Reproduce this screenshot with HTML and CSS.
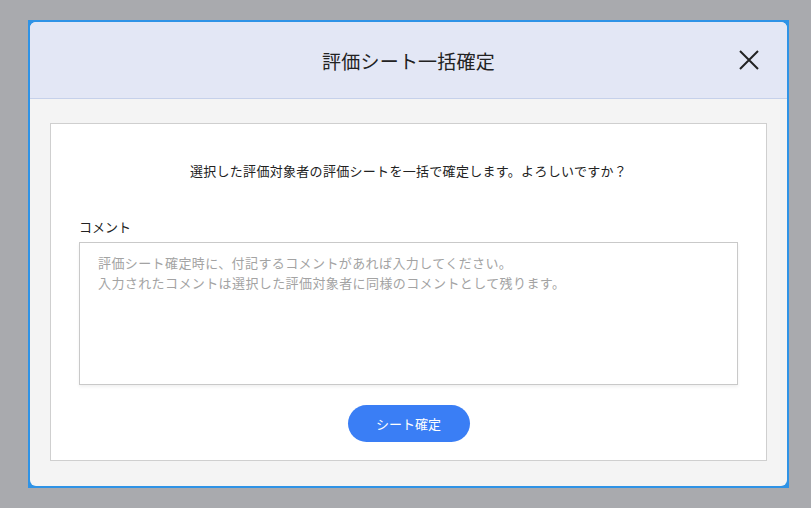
FILE: index.html
```html
<!DOCTYPE html>
<html lang="ja">
<head>
    <meta charset="UTF-8">
    <meta name="viewport" content="width=device-width, initial-scale=1.0">
    <title>評価シート一括確定</title>
    <link rel="stylesheet" href="styles.css">
</head>
<body>
    <div class="overlay">
        <div class="modal-frame">
            <div class="modal">
                <div class="modal-header">
                    <h1 class="modal-title">評価シート一括確定</h1>
                    <button class="close-btn" aria-label="閉じる">
                        <svg width="20" height="20" viewBox="0 0 20 20">
                            <path d="M1 1 L19 19 M19 1 L1 19" stroke="#222" stroke-width="2" fill="none"/>
                        </svg>
                    </button>
                </div>
                <div class="modal-body">
                    <div class="panel">
                        <p class="message">選択した評価対象者の評価シートを一括で確定します。よろしいですか？</p>
                        <label class="field-label" for="comment">コメント</label>
                        <textarea id="comment" class="comment" placeholder="評価シート確定時に、付記するコメントがあれば入力してください。&#10;入力されたコメントは選択した評価対象者に同様のコメントとして残ります。"></textarea>
                        <div class="actions">
                            <button class="confirm-btn">シート確定</button>
                        </div>
                    </div>
                </div>
            </div>
        </div>
    </div>
</body>
</html>
```

FILE: styles.css
```css
* {
    margin: 0;
    padding: 0;
    box-sizing: border-box;
}
body, html {
    width: 100%;
    height: 100%;
    overflow: hidden;
}
body {
    background-color: #a9aaae;
    font-family: "Noto Sans CJK JP", "Noto Sans", sans-serif;
    color: #333;
}
.overlay {
    padding: 20px 22px 0 28px;
}
.modal-frame {
    width: 761px;
    height: 468px;
    background-color: #2f93e6;
    padding: 2px;
}
.modal {
    height: 100%;
    background-color: #f4f4f4;
    border-radius: 6px;
    overflow: hidden;
    display: flex;
    flex-direction: column;
}
.modal-header {
    height: 77px;
    flex-shrink: 0;
    background-color: #e3e7f5;
    border-bottom: 1px solid #c6d1ea;
    display: flex;
    align-items: center;
    justify-content: center;
    position: relative;
}
.modal-title {
    font-size: 19px;
    font-weight: 400;
    color: #222;
    letter-spacing: 0.2px;
}
.close-btn {
    position: absolute;
    right: 28px;
    top: 28px;
    width: 20px;
    height: 20px;
    border: none;
    background: none;
    cursor: pointer;
    display: flex;
}
.modal-body {
    flex: 1;
    padding: 24px 20px 25px 20px;
    display: flex;
}
.panel {
    flex: 1;
    background-color: #fff;
    border: 1px solid #cfcfcf;
    padding: 0 28px 18px 28px;
    display: flex;
    flex-direction: column;
}
.message {
    text-align: center;
    font-size: 13px;
    letter-spacing: 0.3px;
    line-height: 20px;
    margin-top: 37px;
    color: #222;
}
.field-label {
    font-size: 13px;
    line-height: 20px;
    margin-top: 36px;
    color: #222;
}
.comment {
    margin-top: 5px;
    height: 143px;
    width: 100%;
    border: 1px solid #c9c9c9;
    resize: none;
    font-family: inherit;
    font-size: 13px;
    letter-spacing: 0.4px;
    line-height: 20px;
    padding: 10px 18px;
    color: #333;
    box-shadow: 0 2px 3px rgba(0, 0, 0, 0.06);
}
.comment::placeholder {
    color: #a3a3a3;
}
.actions {
    display: flex;
    justify-content: center;
    margin-top: 20px;
}
.confirm-btn {
    width: 122px;
    height: 37px;
    border: none;
    border-radius: 19px;
    background-color: #3a7ef5;
    color: #fff;
    font-family: inherit;
    font-size: 13px;
    cursor: pointer;
}
```
